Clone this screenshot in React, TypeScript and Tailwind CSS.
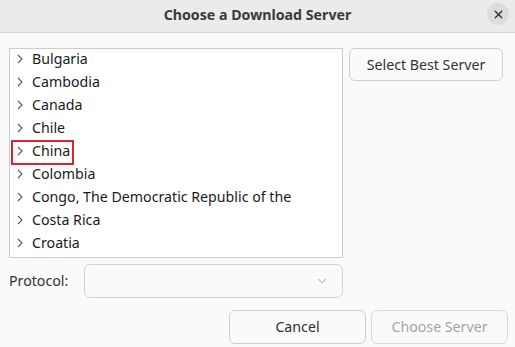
import { ChevronDown, X } from "lucide-react";

const countries = [
  "Bulgaria",
  "Cambodia",
  "Canada",
  "Chile",
  "China",
  "Colombia",
  "Congo, The Democratic Republic of the",
  "Costa Rica",
  "Croatia",
];

function Expander() {
  return (
    <svg width="6" height="10" viewBox="0 0 6 10" className="shrink-0">
      <polyline points="1,1 5,5 1,9" fill="none" stroke="#5a5a5a" strokeWidth="1.1" />
    </svg>
  );
}

export default function App() {
  return (
    <div
      className="w-[515px] h-[347px] bg-[#fafafa] text-[#2e2e2e] text-[14.2px] flex flex-col overflow-hidden"
      style={{ fontFamily: '"Noto Sans", "Open Sans", sans-serif' }}
    >
      {/* Header bar */}
      <div className="relative h-[33px] shrink-0 bg-[#ebebeb] border-b border-[#d6d6d6] flex items-center justify-center pb-[3px]">
        <span className="font-bold text-[14.2px] text-[#3a3a3a]">Choose a Download Server</span>
        <button className="absolute right-[6px] top-[3px] h-[22px] w-[22px] rounded-full bg-[#dcdcdc] flex items-center justify-center text-[#333]">
          <X size={13} strokeWidth={2.5} />
        </button>
      </div>

      <div className="flex flex-col pl-[9px] pt-[15px]">
        <div className="flex gap-[6px]">
          {/* Country list */}
          <div className="w-[334px] h-[210px] bg-white border border-[#cdcdcd] flex flex-col overflow-hidden">
            {countries.map((c) => (
              <div key={c} className="h-[23px] shrink-0 flex items-center">
                <div
                  className={`flex items-center h-[25px] pl-[4px] pr-[2px] ml-[1px] border-2 ${
                    c === "China" ? "border-[#e0202a]" : "border-transparent"
                  }`}
                >
                  <div className="flex items-center mb-[3px]">
                    <Expander />
                    <span className="ml-[9px] text-[#1a1a1a]">{c}</span>
                  </div>
                </div>
              </div>
            ))}
          </div>

          <div>
            <button className="h-[33px] w-[154px] rounded-[6px] border border-[#cfcfcf] bg-[#fafafa] text-[#333]">
              Select Best Server
            </button>
          </div>
        </div>

        {/* Protocol */}
        <div className="flex items-center mt-[6px]">
          <span className="w-[75px] text-[#333]">Protocol:</span>
          <div className="w-[259px] h-[34px] rounded-[6px] border border-[#d3d3d3] bg-[#fafafa] flex items-center justify-end pr-[13px]">
            <ChevronDown size={14} strokeWidth={1.3} className="text-[#888]" />
          </div>
        </div>

        {/* Dialog buttons */}
        <div className="flex justify-end gap-[5px] mt-[12px] pr-[7px]">
          <button className="h-[34px] w-[137px] rounded-[6px] border border-[#cfcfcf] bg-[#fafafa] text-[#2e2e2e]">
            Cancel
          </button>
          <button className="h-[34px] w-[137px] rounded-[6px] border border-[#dadada] bg-[#fafafa] text-[#a5a5a5]">
            Choose Server
          </button>
        </div>
      </div>
    </div>
  );
}
